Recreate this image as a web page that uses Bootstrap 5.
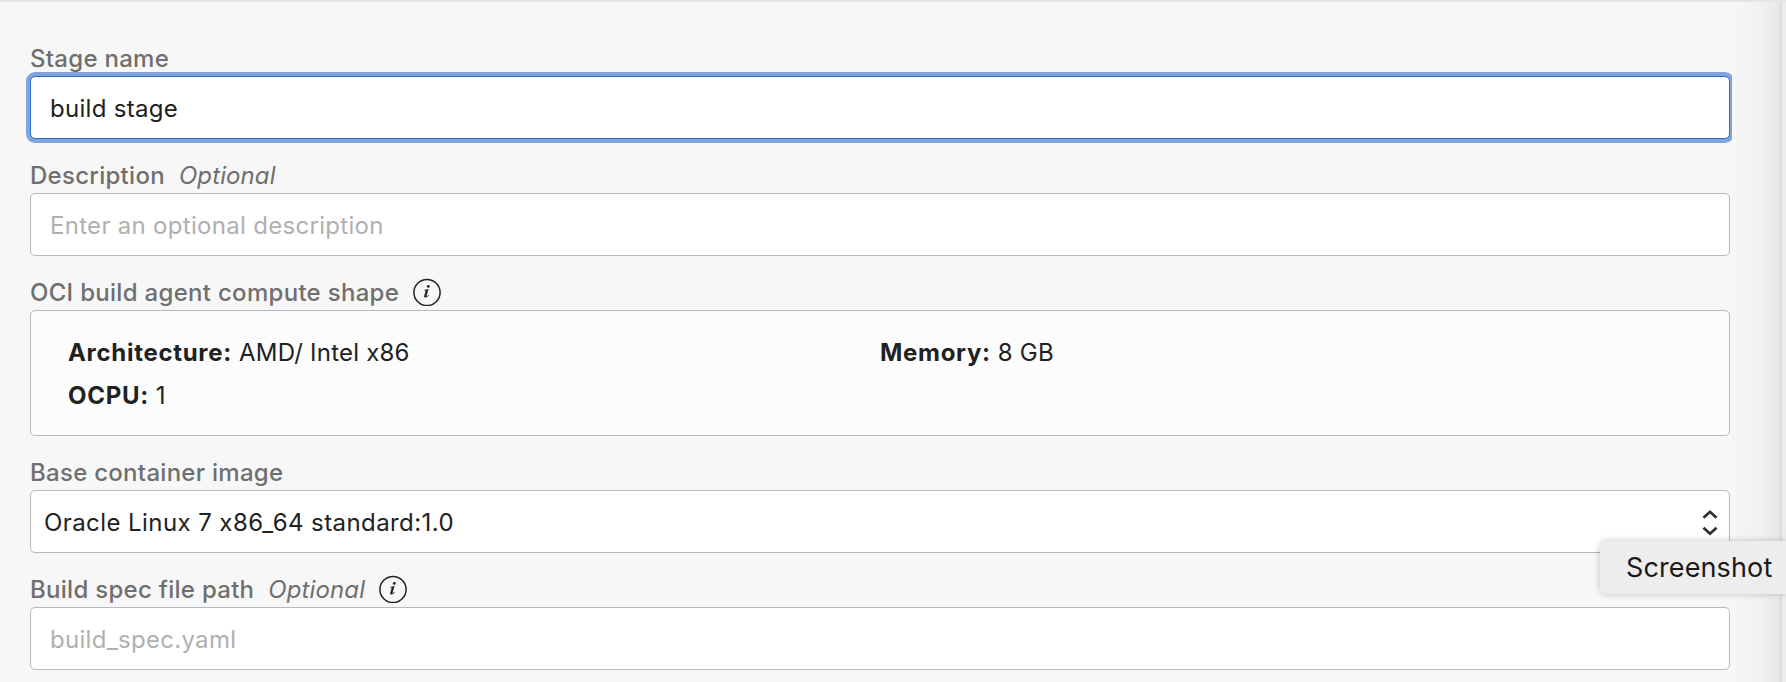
<!DOCTYPE html>
<html lang="en">
<head>
<meta charset="utf-8">
<meta name="viewport" content="width=device-width, initial-scale=1">
<title>Build stage</title>
<link href="https://cdn.jsdelivr.net/npm/bootstrap@5.3.0/dist/css/bootstrap.min.css" rel="stylesheet">
<style>
  body { font-family: Inter, "Liberation Sans", sans-serif; font-size: 24px; line-height: 30px; color: #212121; background: #f7f7f7; height: 682px; font-feature-settings: "calt" 0; }
  .stage-panel { height: 682px; border-top: 2px solid #e4e4e4; padding: 20px 56px 0 30px; }
  .panel-edge { top: 2px; right: 0; width: 54px; height: 680px; background: linear-gradient(to right, #f7f7f7, #f1f1f1 50%, #e8e8e8 88%, #d9d9d9 88.5%, #d9d9d9 91.5%, #ececec 92%); }
  .field-label { height: 54px; padding-top: 22px; color: #6f6f6f; font-weight: 500; white-space: nowrap; letter-spacing: .28px; }
  .field-label.plain-label { letter-spacing: .3px; }
  .optional { font-style: italic; font-weight: 400; letter-spacing: .1px; margin-left: 14px; }
  .form-control, .form-select { height: 63px; border: 1px solid #b5b9c1; border-radius: 5px; font-size: 24px; color: #212121; padding: 2px 19px 0; background-color: #fff; letter-spacing: .3px; }
  .form-control::placeholder { color: #b0b0b0; opacity: 1; }
  .form-control.active-field { border-color: #2f6fc9; box-shadow: 0 0 0 4px #7fa5de; }
  .form-select { padding: 2px 13px 0; background-image: none; letter-spacing: .42px; }
  .shape-box { height: 126px; border: 1px solid #b3b9c2; border-radius: 5px; background: #fcfcfc; padding: 20px 37px 0; line-height: 43px; letter-spacing: .22px; }
  .shape-box b { font-weight: 700; letter-spacing: .7px; }
  .chevrons { right: 12px; top: 18px; }
  .shot-label { left: 1600px; top: 541px; width: 186px; height: 53px; background: #ededed; border-radius: 7px 0 0 7px; padding: 12px 0 0 26px; font-size: 27px; letter-spacing: .12px; color: #1a1a1a; box-shadow: 0 0 7px rgba(0,0,0,.22); white-space: nowrap; }
  .info-icon { margin-left: 14px; }
</style>
</head>
<body class="position-relative overflow-hidden">
<svg width="0" height="0" class="position-absolute">
  <symbol id="info" viewBox="0 0 28 28">
    <circle cx="14" cy="14.500" r="13.100" fill="none" stroke="#212121" stroke-width="1.5"/>
    <path d="M11.300 12l4.300-.9-2.100 6.800c-.2.700.3.600 1.900-1.100l.5.500c-2.400 2.900-5.400 3.100-4.600.1l1.400-4.700-1.500-.1z" fill="#212121"/>
    <circle cx="15.300" cy="8.400" r="1.400" fill="#212121"/>
  </symbol>
</svg>
<div class="panel-edge position-absolute"></div>
<main class="stage-panel">
  <div>
    <label class="field-label d-flex" for="stage">Stage name</label>
    <input class="form-control active-field" id="stage" value="build stage">
  </div>
  <div>
    <label class="field-label d-flex" for="desc"><span>Description</span><span class="optional">Optional</span></label>
    <input class="form-control" id="desc" placeholder="Enter an optional description">
  </div>
  <div>
    <div class="field-label plain-label d-flex"><span>OCI build agent compute shape</span>
      <svg class="info-icon" width="28" height="28"><use href="#info"/></svg>
    </div>
    <div class="shape-box">
      <div class="row gx-0">
        <div class="col-6"><b>Architecture:</b> AMD/ Intel x86</div>
        <div class="col-6"><b>Memory:</b> 8 GB</div>
        <div class="col-6"><b>OCPU:</b> 1</div>
      </div>
    </div>
  </div>
  <div>
    <label class="field-label d-flex" for="image">Base container image</label>
    <div class="position-relative">
      <select class="form-select" id="image"><option>Oracle Linux 7 x86_64 standard:1.0</option></select>
      <svg class="chevrons position-absolute" width="16" height="28" viewBox="0 0 16 28" fill="none" stroke="#303030" stroke-width="2.8"><path d="M1.500 9.800L8 3.800 14.500 9.800M1.500 19.700L8 25.700 14.500 19.700"/></svg>
    </div>
  </div>
  <div>
    <label class="field-label d-flex" for="spec"><span>Build spec file path</span><span class="optional">Optional</span>
      <svg class="info-icon" width="28" height="28"><use href="#info"/></svg>
    </label>
    <input class="form-control" id="spec" placeholder="build_spec.yaml">
  </div>
</main>
<div class="shot-label position-absolute">Screenshot</div>
<script src="https://cdn.jsdelivr.net/npm/bootstrap@5.3.0/dist/js/bootstrap.bundle.min.js"></script>
</body>
</html>
